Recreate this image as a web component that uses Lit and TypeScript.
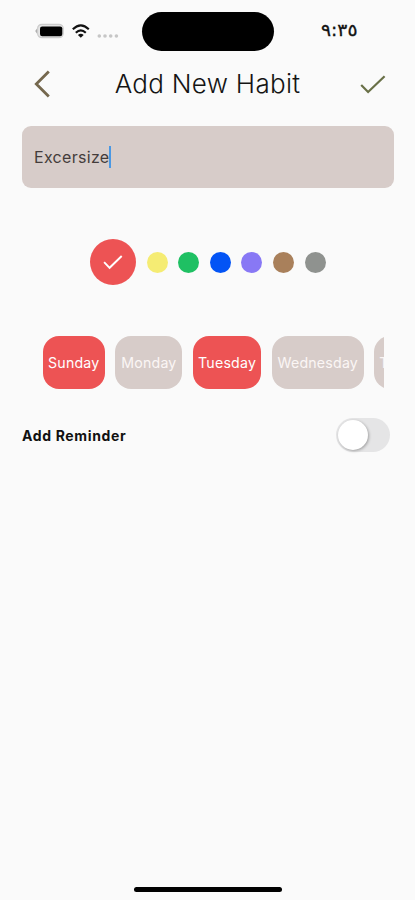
import { LitElement, html, css, svg } from "lit";
import { customElement, state } from "lit/decorators.js";
import { classMap } from "lit/directives/class-map.js";

@customElement("status-bar")
class StatusBar extends LitElement {
  static styles = css`
    :host { display: flex; height: 63px; box-sizing: border-box; padding: 12px 0 0 35px; align-items: flex-start; }
    .icons { width: 107px; height: 38px; flex: none; }
    .island { width: 132px; height: 39px; border-radius: 20px; background: #000; flex: none; }
    .time { margin: 7px 0 0 47px; font: 400 17px/22px "DejaVu Sans", sans-serif; direction: ltr; unicode-bidi: isolate-override; color: #111; transform: scaleX(1.1); transform-origin: left; -webkit-text-stroke: 0.3px #111; }
  `;
  render() {
    return html`
      <svg class="icons" viewBox="0 0 107 38">
        <rect x="2.6" y="12.3" width="25.6" height="13.4" rx="4.2" fill="#e4e4e4" stroke="#cccccc" stroke-width="1.2" />
        <path d="M2 16.4L.2 19L2 21.8Z" fill="#b0b0b0" />
        <rect x="5" y="14.4" width="22.3" height="9.8" rx="2.2" fill="#000" />
        <g fill="none" stroke="#111" stroke-width="2.1">
          <path d="M37.8 17.3Q45.8 9.5 53.8 17.3" />
          <path d="M40.8 20.8Q45.8 16 50.8 20.8" />
        </g>
        <path d="M42.9 22.9Q45.8 20.4 48.7 22.9L45.8 25.8Z" fill="#111" />
        <g fill="#c6c6c6">
          ${[64.3, 70, 75.7, 81.4].map((x) => svg`<circle cx=${x} cy="24" r="1.8" />`)}
        </g>
      </svg>
      <div class="island"></div>
      <div class="time">٩:٣٥</div>
    `;
  }
}

@customElement("app-root")
class AppRoot extends LitElement {
  @state() private selected = new Set(["Sunday", "Tuesday"]);
  @state() private reminder = false;

  private colors = ["#f5ec73", "#1fc063", "#0354f5", "#8878f5", "#a9805b", "#8f928f"];
  private days = [
    { name: "Sunday", size: "w63" },
    { name: "Monday", size: "w67" },
    { name: "Tuesday", size: "w69" },
    { name: "Wednesday", size: "w92" },
    { name: "Thursday", size: "w75" },
  ];

  static styles = css`
    :host { display: flex; flex-direction: column; width: 415px; height: 900px; background: #fafafa; overflow: hidden; font-family: Inter, "Liberation Sans", sans-serif; }
    header { display: flex; height: 42px; align-items: center; padding: 0 28px 0 32px; }
    header svg { flex: none; }
    h1 { flex: 1; margin: 0; text-align: center; font-size: 26px; font-weight: 300; line-height: 42px; letter-spacing: 0.3px; color: #141414; white-space: nowrap; }
    .field { display: flex; align-items: center; height: 62px; margin: 21px 21px 0 22px; padding: 0 12px; box-sizing: border-box; border-radius: 9px; background: #d7ccc9; font-size: 16px; letter-spacing: 0.3px; color: #443c3b; }
    .caret { width: 2px; height: 22px; background: #4a98e4; }
    .colors { display: flex; align-items: center; height: 48px; margin: 50px 0 0 90px; gap: 10.6px; }
    .dot { width: 21px; height: 21px; border-radius: 50%; }
    .active { width: 46px; height: 46px; border-radius: 50%; background: #ed5354; display: flex; align-items: center; justify-content: center; }
    .days { display: flex; gap: 10.4px; margin: 50px 31px 0 42.5px; overflow: hidden; height: 53px; }
    .day { flex: none; display: flex; align-items: center; justify-content: center; border-radius: 16px; background: #d7ccc9; color: #fbf6f5; font-size: 14.2px; letter-spacing: 0.2px; }
    .day.on { background: #ed5354; color: #fff; }
    .w63 { width: 62.5px; } .w67 { width: 67px; } .w69 { width: 68.6px; } .w92 { width: 92px; } .w75 { width: 75px; }
    .reminder { display: flex; align-items: center; justify-content: space-between; height: 34px; margin: 29px 25px 0 22px; font-size: 14px; font-weight: 700; letter-spacing: 0.65px; color: #111; }
    .switch { box-sizing: border-box; width: 54px; height: 34px; border-radius: 17px; padding: 2px; background: #e5e5e6; display: flex; }
    .switch.enabled { justify-content: flex-end; background: #ed5354; }
    .knob { width: 30px; height: 30px; border-radius: 50%; background: #fff; box-shadow: 1px 1px 3px rgba(0, 0, 0, 0.3); }
    .home { width: 148px; height: 5px; border-radius: 3px; background: #000; margin: auto 0 8px 134px; }
  `;

  private toggleDay(name: string) {
    const next = new Set(this.selected);
    next.has(name) ? next.delete(name) : next.add(name);
    this.selected = next;
  }

  render() {
    return html`
      <status-bar></status-bar>
      <header>
        <svg width="24" height="42" viewBox="0 0 24 42" fill="none" stroke="#75684e" stroke-width="2.8">
          <path d="M16.8 8.6L4.3 21L16.8 33.4" />
        </svg>
        <h1>Add New Habit</h1>
        <svg width="28" height="42" viewBox="0 0 28 42" fill="none" stroke="#697047" stroke-width="2.2">
          <path d="M2.2 22L9.1 29L25.6 13.2" />
        </svg>
      </header>
      <div class="field"><span>Excersize</span><span class="caret"></span></div>
      <div class="colors">
        <div class="active">
          <svg width="22" height="20" viewBox="0 0 22 20" fill="none" stroke="#fff" stroke-width="1.9">
            <path d="M2.1 10.2L7.6 15.8L19.7 4" />
          </svg>
        </div>
        ${this.colors.map((c) => html`<div class="dot" style="background:${c}"></div>`)}
      </div>
      <div class="days">
        ${this.days.map(
          (d) => html`<div
            class=${classMap({ day: true, [d.size]: true, on: this.selected.has(d.name) })}
            @click=${() => this.toggleDay(d.name)}
          >${d.name}</div>`
        )}
      </div>
      <div class="reminder">
        <span>Add Reminder</span>
        <div class=${classMap({ switch: true, enabled: this.reminder })} @click=${() => (this.reminder = !this.reminder)}>
          <div class="knob"></div>
        </div>
      </div>
      <div class="home"></div>
    `;
  }
}
